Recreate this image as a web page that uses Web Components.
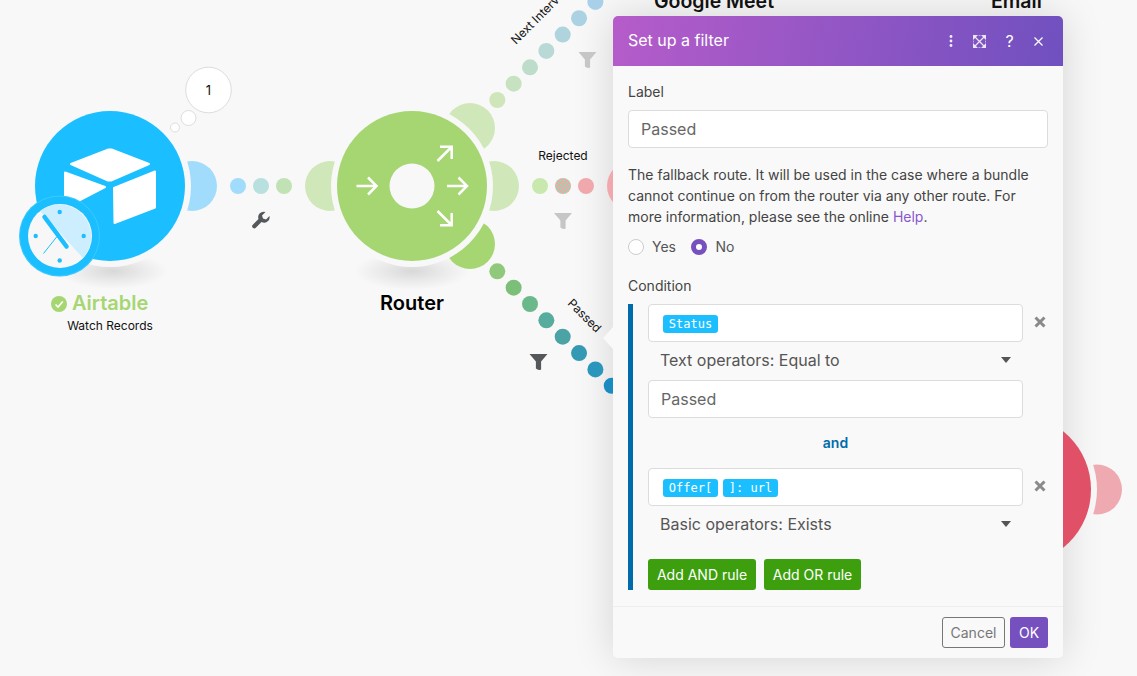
<!DOCTYPE html>
<html lang="en">
<head>
<meta charset="utf-8">
<title>Set up a filter</title>
<style>
  html, body { margin: 0; height: 100%; background: #f8f8f8; overflow: hidden; }
  body { font-family: Inter, "Liberation Sans", sans-serif; }
</style>
</head>
<body>
<dialog-shadow></dialog-shadow>
<flow-canvas></flow-canvas>
<filter-dialog heading="Set up a filter">
  <form-label>Label</form-label>
  <text-field>Passed</text-field>
  <help-text>The fallback route. It will be used in the case where a bundle cannot continue on from the router via any other route. For more information, please see the online <a href="#" style="color:#8a56cf;text-decoration:none">Help</a>.</help-text>
  <radio-row></radio-row>
  <form-label style="margin-top:19px">Condition</form-label>
  <rule-group>
    <rule-row removable><text-field><mono-tag>Status</mono-tag></text-field></rule-row>
    <op-select>Text operators: Equal to</op-select>
    <rule-row><text-field>Passed</text-field></rule-row>
    <and-sep>and</and-sep>
    <rule-row removable><text-field><mono-tag>Offer[</mono-tag><mono-tag>]: url</mono-tag></text-field></rule-row>
    <op-select>Basic operators: Exists</op-select>
    <div style="display:flex;gap:8px;margin-top:15px">
      <app-button kind="green" style="width:108px">Add AND rule</app-button>
      <app-button kind="green" style="width:97px">Add OR rule</app-button>
    </div>
  </rule-group>
  <app-button slot="footer" kind="outline" style="width:63px">Cancel</app-button>
  <app-button slot="footer" kind="purple" style="width:38px">OK</app-button>
</filter-dialog>

<script>
const BG = '#f8f8f8';

function lobe(cx, cy, r, color, mask) {
  return `<circle cx="${cx}" cy="${cy}" r="${r}" fill="${color}"${mask ? ` mask="url(#${mask})"` : ''}/>`;
}

function funnel(x, y, color) {
  return `<path transform="translate(${x} ${y})" fill="${color}" d="M-9-8H9L2.600-.6V7.400Q0 9-2.600 6.600V-.6Z"/>`;
}

class DialogShadow extends HTMLElement {
  connectedCallback() {
    this.attachShadow({ mode: 'open' }).innerHTML = `
      <style>
        :host { display: block; position: absolute; left: 613px; top: 16px; width: 450px; height: 642px; border-radius: 5px; box-shadow: 0 0 40px rgba(0,0,0,.15); }
      </style>`;
  }
}
customElements.define('dialog-shadow', DialogShadow);

class FlowCanvas extends HTMLElement {
  connectedCallback() {
    this.attachShadow({ mode: 'open' });
    const up = ['#cfe6bb','#c6e2c0','#bddcca','#b8d9d6','#afd4de','#abd2e3','#a8d0e8'];
    const down = ['#91c97c','#7cbf78','#6bb98a','#57ac9d','#4ba3a5','#3599b4','#2b96bb','#1a8bc0'];
    const upDots = up.map((c, i) => `<circle cx="${497.3 + i * 16.35}" cy="${100 - i * 16.35}" r="8" fill="${c}"/>`).join('');
    const downDots = down.map((c, i) => `<circle cx="${497.3 + i * 16.35}" cy="${271.3 + i * 16.35}" r="8" fill="${c}"/>`).join('');
    this.shadowRoot.innerHTML = `
      <style>
        :host { display: block; position: absolute; inset: 0; }
        svg { display: block; }
        text { font-family: Inter, "Liberation Sans", sans-serif; fill: #111; }
        .name { font-size: 20px; font-weight: 600; }
        .top { font-size: 19.500px; font-weight: 600; }
        .small { font-size: 12px; }
      </style>
      <svg width="1137" height="676" viewBox="0 0 1137 676">
        <defs>
          <radialGradient id="sh">
            <stop offset="0" stop-color="#000" stop-opacity=".13"/>
            <stop offset=".55" stop-color="#000" stop-opacity=".055"/>
            <stop offset="1" stop-color="#000" stop-opacity="0"/>
          </radialGradient>
          <pattern id="mix" width="4" height="4" patternUnits="userSpaceOnUse">
            <rect width="4" height="4" fill="#efa6aa"/>
            <rect width="2" height="2" fill="#a8d0a8"/>
            <rect x="2" y="2" width="2" height="2" fill="#a8d0a8"/>
          </pattern>
          <mask id="redGap" maskUnits="userSpaceOnUse" x="1000" y="400" width="137" height="180">
            <rect x="1000" y="400" width="137" height="180" fill="#fff"/>
            <circle cx="1016" cy="489.500" r="81" fill="#000"/>
          </mask>
        </defs>

        <text class="top" x="654" y="8">Google Meet</text>
        <text class="top" x="991" y="8">Email</text>

        <!-- airtable -->
        <ellipse cx="113" cy="271" rx="55" ry="18" fill="url(#sh)"/>
        ${lobe(192, 186, 25, '#a2dcfd')}
        <circle cx="110" cy="186" r="81" fill="${BG}"/>
        <circle cx="110" cy="186" r="75" fill="#1bbfff"/>
        <g fill="#fff" stroke="#fff" stroke-width="2" stroke-linejoin="round">
          <path d="M71 164 108.500 149.500H111.500L149 164 111 180.500H108Z"/>
          <path d="M114 188 155 171.500V207.500L114.500 223Z"/>
          <path d="M65 172.500 105 187 80 200 65 206Z"/>
        </g>
        <circle cx="59.500" cy="236" r="40.500" fill="#1bbfff"/>
        <circle cx="59.500" cy="236" r="40" fill="none" stroke="#fff" stroke-opacity=".15"/>
        <circle cx="60" cy="236" r="32" fill="#f7f7f7"/>
        <path d="M40 211A32 32 0 0 1 83 258Z" fill="#cdeeff"/>
        <g fill="#1bbfff">
          <circle cx="59.700" cy="212" r="2.200"/><circle cx="83.700" cy="236" r="2.200"/>
          <circle cx="59.700" cy="260.500" r="2.200"/><circle cx="35.700" cy="236" r="2.200"/>
        </g>
        <path d="M44.500 217 66.500 246.500" stroke="#1bbfff" stroke-width="4.500" stroke-linecap="round"/>
        <path d="M57 236.500 43.500 253.500" stroke="#1bbfff" stroke-width="1"/>

        <g fill="#fff" stroke="#ddd">
          <circle cx="208.500" cy="90" r="22.800"/>
          <circle cx="188.500" cy="118" r="7.500"/>
          <circle cx="175" cy="127.500" r="4.500"/>
        </g>
        <text x="208.500" y="95" font-size="13" text-anchor="middle">1</text>

        <circle cx="238" cy="186" r="8" fill="#a2dcfd"/>
        <circle cx="261" cy="186" r="8" fill="#b8e0de"/>
        <circle cx="284" cy="186" r="8" fill="#c0e2b4"/>
        <path fill="#55585b" d="M269.500 216 266 219.500 263 218.500 262 215.500 265.500 212A5.500 5.500 0 0 0 258.500 219L252.800 224.700A2 2 0 0 0 255.800 227.700L261.500 222A5.500 5.500 0 0 0 269.500 216Z"/>

        <circle cx="59" cy="304" r="8" fill="#a6d672"/>
        <path d="M55.500 304.500 58 307 62.800 301.500" fill="none" stroke="#fff" stroke-width="1.600"/>
        <text class="name" x="72" y="310" style="fill:#a6d672">Airtable</text>
        <text class="small" x="110" y="330" text-anchor="middle">Watch Records</text>

        <!-- router -->
        <ellipse cx="412" cy="271" rx="58" ry="19" fill="url(#sh)"/>
        ${lobe(330, 186, 25, '#d0e8b9')}
        ${lobe(494, 186, 25, '#d0e8b9')}
        ${lobe(470, 128, 25, '#d0e8b9')}
        ${lobe(470, 244, 25, '#a6d672')}
        <circle cx="412" cy="186" r="81" fill="${BG}"/>
        <circle cx="412" cy="186" r="75" fill="#a6d672"/>
        <circle cx="412" cy="186" r="22.500" fill="${BG}"/>
        <g fill="none" stroke="#fff" stroke-width="2.500">
          <path d="M356.500 186H376M368 177.500 376.500 186 368 194.500"/>
          <path d="M447 186H466.500M458.500 177.500 467 186 458.500 194.500"/>
          <path d="M437.500 161 451 147.500M440 146.700H451.700V159"/>
          <path d="M437.500 211 451 224.500M451.700 213V225.300H440"/>
        </g>
        <text class="name" x="412" y="310" text-anchor="middle" style="fill:#000">Router</text>

        <!-- routes -->
        ${upDots}
        ${downDots}
        <circle cx="540" cy="186" r="8" fill="#c9e8ae"/>
        <circle cx="563" cy="186" r="8" fill="url(#mix)"/>
        <circle cx="586" cy="186" r="8" fill="#f0a8ac"/>
        ${lobe(632, 186, 25, '#f0a8ae')}
        <text class="small" x="563" y="160" text-anchor="middle">Rejected</text>
        <text class="small" transform="translate(516 45) rotate(-45)">Next Interview</text>
        <text class="small" transform="translate(567 304) rotate(45)">Passed</text>
        ${funnel(587.500, 60, '#c6c6c6')}
        ${funnel(563, 221, '#c6c6c6')}
        ${funnel(538.500, 362, '#55585b')}

        <!-- red module behind the dialog -->
        ${lobe(1097, 489.500, 25, '#eeaab0', 'redGap')}
        <circle cx="1016" cy="489.500" r="75" fill="#e05067"/>
      </svg>`;
  }
}
customElements.define('flow-canvas', FlowCanvas);

class FilterDialog extends HTMLElement {
  connectedCallback() {
    this.attachShadow({ mode: 'open' });
    this.shadowRoot.innerHTML = `
      <style>
        :host {
          display: block; position: absolute; left: 613px; top: 16px; width: 450px;
          background: #f9f9f9; border-radius: 5px; font: 14px/20px Inter, "Liberation Sans", sans-serif; color: #444;
        }
        .pointer {
          position: absolute; left: -10px; top: 311px; width: 0; height: 0;
          border-style: solid; border-width: 11.500px 10px 11.500px 0;
          border-color: transparent #f9f9f9 transparent transparent;
        }
        header {
          display: flex; align-items: center; box-sizing: border-box; height: 50px; padding: 0 15px;
          border-radius: 5px 5px 0 0; color: #fff; font-size: 16px;
          background: linear-gradient(100deg, #b55cca 0%, #7050bf 100%);
        }
        h2 { flex: 1; margin: 0 0 2px; font: inherit; }
        .tools { display: flex; align-items: center; }
        .tools > * { display: block; flex: none; }
        .q { font-size: 16px; width: 14px; text-align: center; margin: 0 17.400px 0 0; }
        main { padding: 16px 15px 16px; }
        footer {
          display: flex; justify-content: flex-end; gap: 5px;
          border-top: 1px solid #eee; padding: 10px 15px;
        }
      </style>
      <div class="pointer"></div>
      <header>
        <h2>${this.getAttribute('heading')}</h2>
        <div class="tools">
          <svg width="4" height="12" viewBox="0 0 4 12" fill="#fff" opacity=".9" style="margin-right:19.500px"><circle cx="2" cy="1.500" r="1.400"/><circle cx="2" cy="6" r="1.400"/><circle cx="2" cy="10.500" r="1.400"/></svg>
          <svg width="13" height="13" viewBox="0 0 13 13" fill="#fff" opacity=".85" style="margin-right:16.800px"><path d="M2 2 11 11M11 2 2 11" stroke="#fff" stroke-width="1.200" fill="none"/><path d="M0 0H5L0 5ZM13 0H8L13 5ZM0 13H5L0 8ZM13 13H8L13 8Z"/><path d="M5.500.5H7.500M5.500 12.500H7.500M.5 5.500V7.500M12.500 5.500V7.500" stroke="#fff" stroke-width="1" fill="none" opacity=".6"/></svg>
          <span class="q">?</span>
          <svg width="9" height="9" viewBox="0 0 9 9" fill="none" stroke="#fff" stroke-width="1.200" style="margin-right:5px"><path d="M.5.500 8.500 8.500M8.500.500.500 8.500"/></svg>
        </div>
      </header>
      <main><slot></slot></main>
      <footer><slot name="footer"></slot></footer>`;
  }
}
customElements.define('filter-dialog', FilterDialog);

class FormLabel extends HTMLElement {
  connectedCallback() {
    this.attachShadow({ mode: 'open' }).innerHTML = `
      <style>:host { display: block; margin-bottom: 8px; font-size: 14px; line-height: 20px; color: #444; }</style><slot></slot>`;
  }
}
customElements.define('form-label', FormLabel);

class TextField extends HTMLElement {
  connectedCallback() {
    this.attachShadow({ mode: 'open' }).innerHTML = `
      <style>
        :host {
          display: flex; align-items: center; gap: 3px; box-sizing: border-box; height: 38px; padding: 0 12px;
          background: #fff; border: 1px solid #dcdcdc; border-radius: 4px; font-size: 16px; color: #666;
        }
      </style><slot></slot>`;
  }
}
customElements.define('text-field', TextField);

class HelpText extends HTMLElement {
  connectedCallback() {
    this.attachShadow({ mode: 'open' }).innerHTML = `
      <style>:host { display: block; margin-top: 16px; font-size: 14px; line-height: 21px; color: #444; }</style><slot></slot>`;
  }
}
customElements.define('help-text', HelpText);

class RadioRow extends HTMLElement {
  connectedCallback() {
    this.attachShadow({ mode: 'open' }).innerHTML = `
      <style>
        :host { display: flex; align-items: center; height: 20px; margin-top: 10px; font-size: 14px; color: #555; }
        i { display: block; box-sizing: border-box; width: 16px; height: 16px; border-radius: 50%; background: #fff; border: 1px solid #ccc; margin-right: 8px; }
        i.on { background: #fff; border: 5px solid #7650bf; }
        span { margin-right: 15.500px; }
      </style>
      <i></i><span>Yes</span><i class="on"></i><span>No</span>`;
  }
}
customElements.define('radio-row', RadioRow);

class RuleGroup extends HTMLElement {
  connectedCallback() {
    this.attachShadow({ mode: 'open' }).innerHTML = `
      <style>:host { display: block; border-left: 5px solid #006bab; padding-left: 15px; }</style><slot></slot>`;
  }
}
customElements.define('rule-group', RuleGroup);

class RuleRow extends HTMLElement {
  connectedCallback() {
    const x = this.hasAttribute('removable')
      ? `<svg width="12" height="12" viewBox="0 0 12 12" stroke="#8a8a8a" stroke-width="3" fill="none"><path d="M1.500 1.500 10.500 10.500M10.500 1.500 1.500 10.500"/></svg>` : '';
    this.attachShadow({ mode: 'open' }).innerHTML = `
      <style>
        :host { display: flex; align-items: flex-start; }
        .f { width: 375px; flex: none; }
        svg { margin: 12px 0 0 11px; }
      </style><div class="f"><slot></slot></div>${x}`;
  }
}
customElements.define('rule-row', RuleRow);

class MonoTag extends HTMLElement {
  connectedCallback() {
    this.attachShadow({ mode: 'open' }).innerHTML = `
      <style>
        :host {
          display: block; box-sizing: border-box; width: 55px; height: 18px; margin: 1px 0 0 2px; border-radius: 3px; background: #1bbfff; color: #fff;
          font: 12px/18px "DejaVu Sans Mono", "Liberation Mono", monospace; text-align: center;
        }
      </style><slot></slot>`;
  }
}
customElements.define('mono-tag', MonoTag);

class OpSelect extends HTMLElement {
  connectedCallback() {
    this.attachShadow({ mode: 'open' }).innerHTML = `
      <style>
        :host { display: flex; align-items: center; justify-content: space-between; height: 36px; padding: 0 11px 2px 12px; box-sizing: content-box; width: 351px; font-size: 16px; color: #555; }
        i { display: block; width: 0; height: 0; border-style: solid; border-width: 6px 5.500px 0; border-color: #555 transparent transparent; }
      </style><span><slot></slot></span><i></i>`;
  }
}
customElements.define('op-select', OpSelect);

class AndSep extends HTMLElement {
  connectedCallback() {
    this.attachShadow({ mode: 'open' }).innerHTML = `
      <style>:host { display: block; width: 375px; height: 50px; line-height: 50px; text-align: center; font-size: 14px; font-weight: 600; color: #006bab; }</style><slot></slot>`;
  }
}
customElements.define('and-sep', AndSep);

class AppButton extends HTMLElement {
  connectedCallback() {
    this.attachShadow({ mode: 'open' }).innerHTML = `
      <style>
        :host { display: block; box-sizing: border-box; height: 31px; border-radius: 3px; font-size: 14px; line-height: 31px; color: #fff; text-align: center; }
        :host([kind=green]) { background: #3d9f0e; }
        :host([kind=purple]) { background: #7650bf; }
        :host([kind=outline]) { border: 1px solid #777; color: #777; line-height: 29px; }
      </style><slot></slot>`;
  }
}
customElements.define('app-button', AppButton);
</script>
</body>
</html>
